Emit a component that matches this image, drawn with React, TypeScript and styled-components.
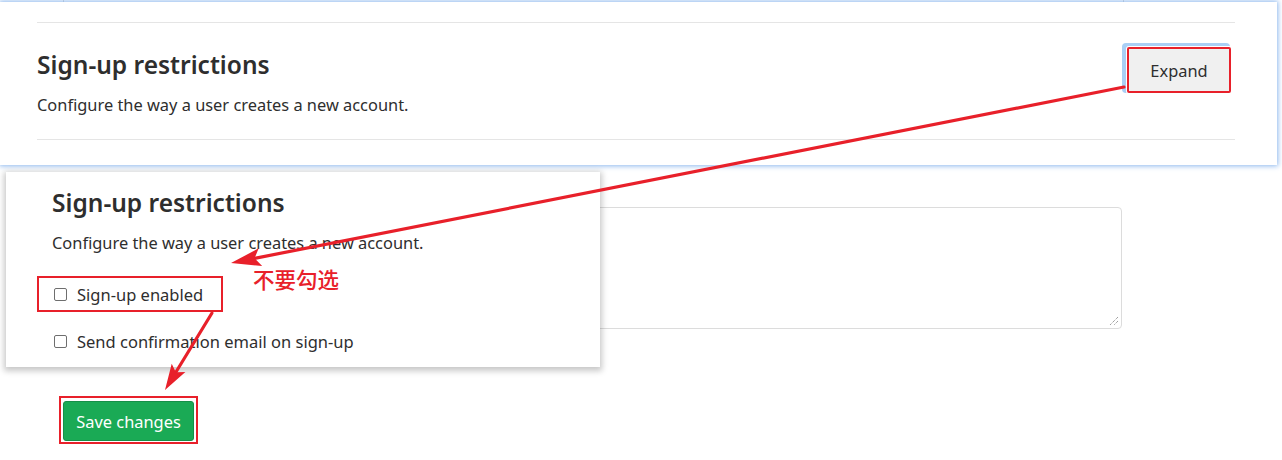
import React from "react";
import styled, { createGlobalStyle } from "styled-components";

const Global = createGlobalStyle`
  html, body { margin: 0; padding: 0; background: #fff; }
  body { font-family: "Noto Sans", "Open Sans", sans-serif; color: #2e2e2e; }
  * { box-sizing: border-box; }
`;

const Page = styled.div`
  position: relative;
  width: 1282px;
  height: 460px;
  overflow: hidden;
  background: #fff;
`;

const TopFrame = styled.div`
  height: 2px;
  margin: 0 158px 0 63px;
  border-left: 1px solid #d8d8d8;
  border-right: 1px solid #d8d8d8;
`;

const Panel = styled.section`
  width: 1277px;
  height: 163px;
  background: #fff;
  box-shadow: 0 0 5px 1px rgba(120, 170, 235, 0.85);
  padding: 20px 42px 0 37px;
  position: relative;
  z-index: 1;
`;

const Rule = styled.div`
  height: 1px;
  background: #e5e5e5;
`;

const SettingsHeader = styled.div`
  display: flex;
  align-items: flex-start;
  justify-content: space-between;
  height: 116px;
  padding-top: 25px;
`;

const Heading = styled.h4`
  margin: 0;
  font-size: 24.5px;
  font-weight: 600;
  line-height: 34px;
  color: #2e2e2e;
`;

const Description = styled.p`
  margin: 0;
  font-size: 16.4px;
  line-height: 22px;
  color: #2e2e2e;
`;

const HeaderText = styled.div`
  display: flex;
  flex-direction: column;
  gap: 12px;
`;

const ExpandButton = styled.button`
  margin-top: -1px;
  margin-right: 4px;
  width: 104px;
  height: 46px;
  background: #f0f0f0;
  border: 2px solid #e8202a;
  border-radius: 2px;
  box-shadow: 0 0 0 1px #fff, -3px -2px 0 2px #a9cff5;
  font-family: inherit;
  font-size: 16.4px;
  color: #2e2e2e;
  padding: 0;
`;

const Content = styled.div`
  display: flex;
  flex-direction: column;
  align-items: flex-start;
  width: 1059px;
  margin-left: 63px;
  padding-top: 42px;
`;

const TextArea = styled.div`
  width: 1059px;
  height: 122px;
  border: 1px solid #dcdcdc;
  border-radius: 4px;
  position: relative;
`;

const Grip = styled.svg`
  position: absolute;
  right: 2px;
  bottom: 2px;
`;

const SaveOutline = styled.div`
  margin-top: 67px;
  margin-left: -4px;
  padding: 3px 2px 1px 2px;
  border: 2px solid #e8202a;
`;

const SaveButton = styled.button`
  width: 131px;
  height: 40px;
  background: #1aaa55;
  border: 1px solid #168f48;
  border-radius: 3px;
  color: #fff;
  font-family: inherit;
  font-size: 16.4px;
  padding: 0;
`;

const Card = styled.div`
  position: absolute;
  left: 6px;
  top: 172px;
  width: 594px;
  height: 195px;
  background: #fff;
  box-shadow: 0 2px 6px 2px rgba(0, 0, 0, 0.22);
  padding: 14px 0 0 46px;
  z-index: 2;
  display: flex;
  flex-direction: column;
`;

const CardDesc = styled(Description)`
  margin-top: 12px;
`;

const CheckList = styled.div`
  display: flex;
  flex-direction: column;
  gap: 11px;
  margin-top: 22px;
  margin-left: -15px;
`;

const CheckRow = styled.label<{ $boxed?: boolean }>`
  display: flex;
  align-items: center;
  gap: 10px;
  width: ${(p) => (p.$boxed ? "186px" : "auto")};
  height: 36px;
  padding-left: 15px;
  border: 2px solid ${(p) => (p.$boxed ? "#e8202a" : "transparent")};
  font-size: 16.5px;
  color: #2e2e2e;
`;

const Box = styled.span`
  width: 13px;
  height: 13px;
  border: 1px solid #6e6e6e;
  border-radius: 2px;
  background: #fff;
  flex: none;
`;

const Note = styled.div`
  position: absolute;
  left: 253px;
  top: 264px;
  font-family: "Noto Sans CJK SC", sans-serif;
  font-size: 21.5px;
  font-weight: 500;
  line-height: 30px;
  color: #e8202a;
  z-index: 3;
`;

const Overlay = styled.svg`
  position: absolute;
  left: 0;
  top: 0;
  pointer-events: none;
  z-index: 4;
`;

function head(x1: number, y1: number, x2: number, y2: number, len: number, w: number) {
  const dx = x2 - x1;
  const dy = y2 - y1;
  const d = Math.hypot(dx, dy);
  const ux = dx / d;
  const uy = dy / d;
  const bx = x2 - ux * len;
  const by = y2 - uy * len;
  const px = -uy * w;
  const py = ux * w;
  const mx = x2 - ux * (len * 0.8);
  const my = y2 - uy * (len * 0.8);
  return {
    pts: `${x2},${y2} ${bx + px},${by + py} ${mx},${my} ${bx - px},${by - py}`,
    lx: mx,
    ly: my,
  };
}

const Arrow: React.FC<{ x1: number; y1: number; x2: number; y2: number; len: number; w: number }> = ({ x1, y1, x2, y2, len, w }) => {
  const h = head(x1, y1, x2, y2, len, w);
  return (
    <g>
      <line x1={x1} y1={y1} x2={h.lx} y2={h.ly} stroke="#e8202a" strokeWidth={3.2} strokeLinecap="round" />
      <polygon points={h.pts} fill="#e8202a" />
    </g>
  );
};

export default function App() {
  return (
    <>
      <Global />
      <Page>
        <TopFrame />
        <Panel>
          <Rule />
          <SettingsHeader>
            <HeaderText>
              <Heading>Sign-up restrictions</Heading>
              <Description>Configure the way a user creates a new account.</Description>
            </HeaderText>
            <ExpandButton>Expand</ExpandButton>
          </SettingsHeader>
          <Rule />
        </Panel>
        <Content>
          <TextArea>
            <Grip width="10" height="10" viewBox="0 0 10 10">
              <path d="M9 1 L1 9 M9 5 L5 9" stroke="#777" strokeWidth="1" strokeDasharray="1 1" />
            </Grip>
          </TextArea>
          <SaveOutline>
            <SaveButton>Save changes</SaveButton>
          </SaveOutline>
        </Content>
        <Card>
          <Heading>Sign-up restrictions</Heading>
          <CardDesc>Configure the way a user creates a new account.</CardDesc>
          <CheckList>
            <CheckRow $boxed>
              <Box />
              Sign-up enabled
            </CheckRow>
            <CheckRow>
              <Box />
              Send confirmation email on sign-up
            </CheckRow>
          </CheckList>
        </Card>
        <Note>不要勾选</Note>
        <Overlay width="1282" height="460" viewBox="0 0 1282 460">
          <Arrow x1={1124} y1={87} x2={231} y2={263} len={30} w={9} />
          <Arrow x1={212} y1={313} x2={165} y2={390} len={26} w={8} />
        </Overlay>
      </Page>
    </>
  );
}
